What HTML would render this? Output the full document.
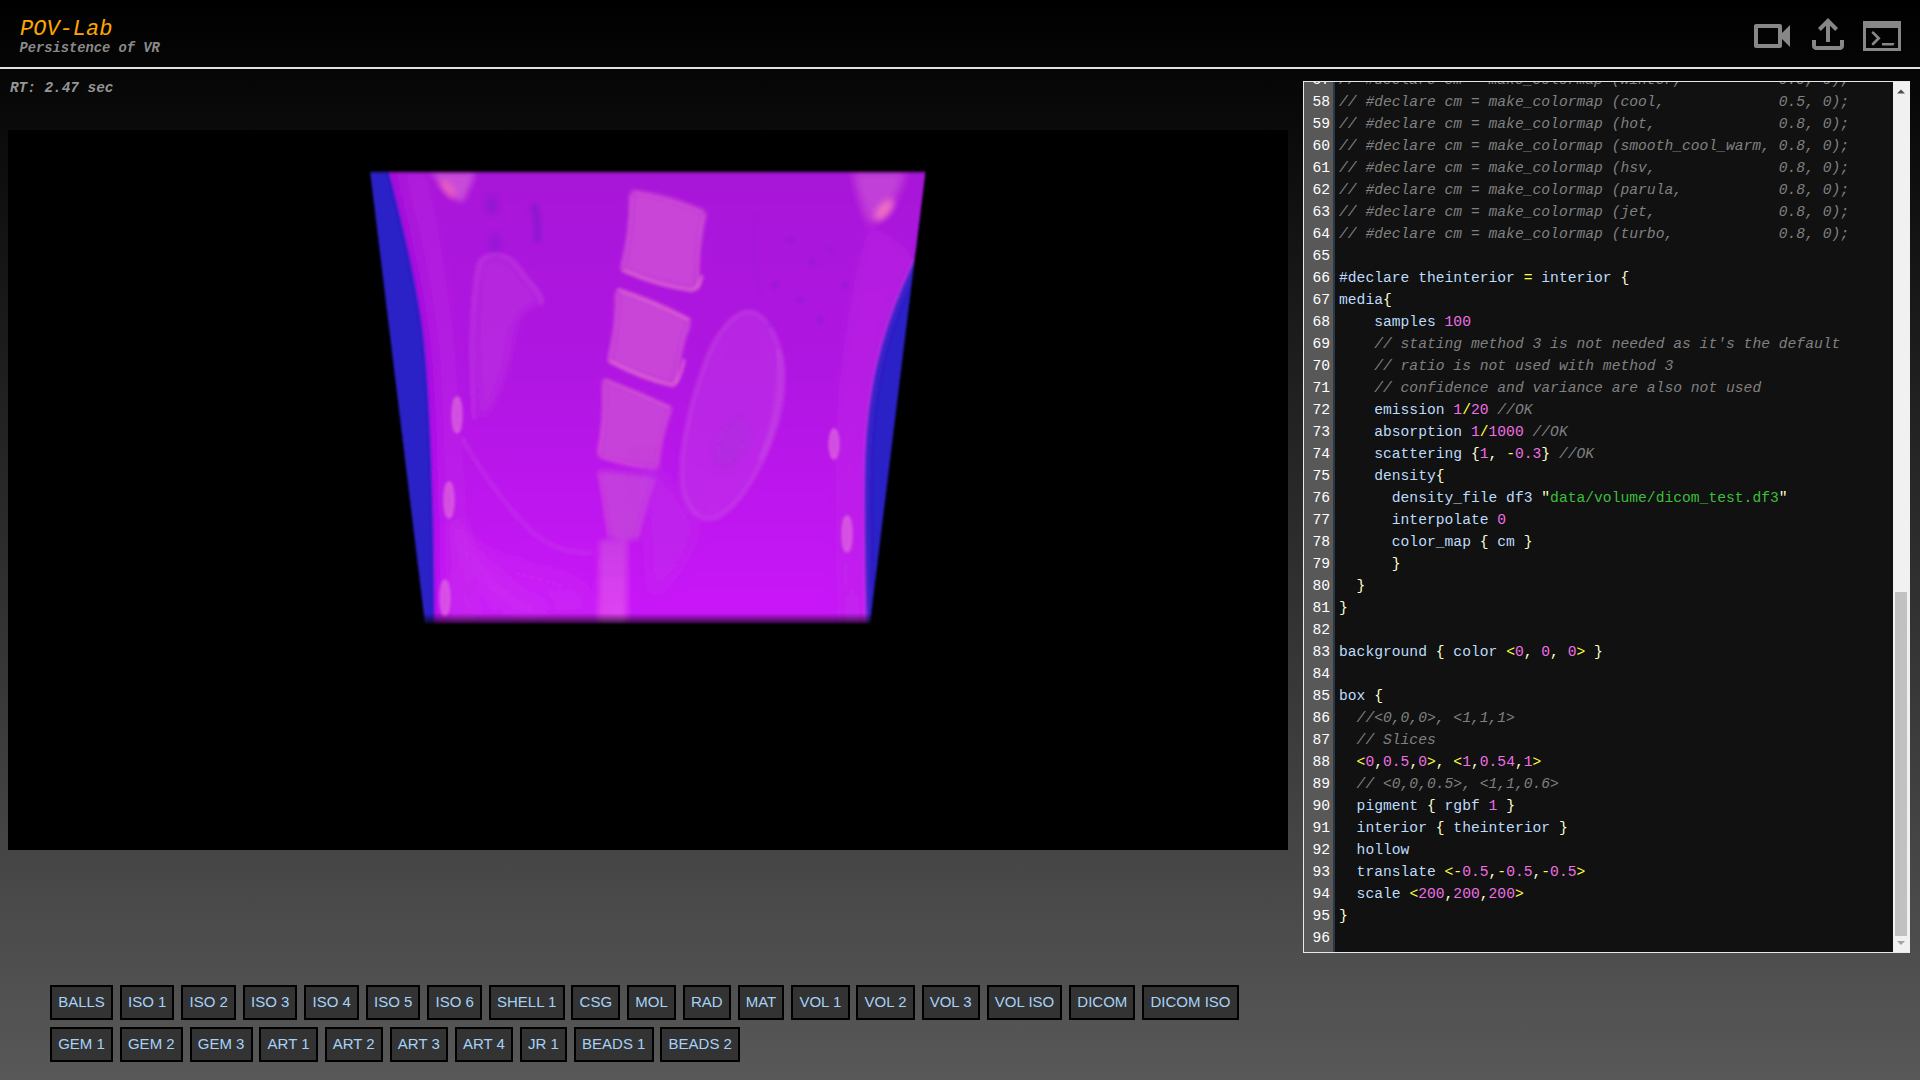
<!DOCTYPE html>
<html><head><meta charset="utf-8"><title>POV-Lab</title>
<style>
html,body{margin:0;padding:0;}
body{width:1920px;height:1080px;overflow:hidden;position:relative;background:linear-gradient(to bottom,#000 0px,#585858 1080px);font-family:"Liberation Sans",sans-serif;}
#hdr{position:absolute;left:0;top:0;width:1920px;height:67px;background:transparent;}
#hline{position:absolute;left:0;top:67px;width:1920px;height:2px;background:#e2e2e2;}
#title{position:absolute;left:20px;top:16px;font-family:"Liberation Mono",monospace;font-style:italic;font-size:22px;line-height:28px;color:#ffa500;white-space:pre;}
#sub{position:absolute;left:19.5px;top:40px;font-family:"Liberation Mono",monospace;font-style:italic;font-size:13.75px;line-height:18px;color:#8a8a8a;font-weight:bold;white-space:pre;}
#rt{position:absolute;left:10px;top:78px;font-family:"Liberation Mono",monospace;font-style:italic;font-size:14.37px;line-height:20px;color:#969696;font-weight:bold;white-space:pre;}
#icons{position:absolute;left:0;top:0;}
#vp{position:absolute;left:8px;top:130px;width:1280px;height:720px;background:#000;overflow:hidden;}
#panel{position:absolute;left:1303px;top:81px;width:605px;height:870px;border:1px solid #e8e8e8;border-right-color:#f1f1f1;background:#111;overflow:hidden;}
#gutter{position:absolute;left:0;top:0;width:29px;height:870px;background:#585858;}
#gstrip{position:absolute;left:29px;top:0;width:2px;height:870px;background:#2b3845;}
#code{position:absolute;left:0;top:-13px;font-family:"Liberation Mono",monospace;font-size:14.667px;line-height:22px;white-space:pre;color:#bddcfb;}
.ln{display:block;height:22px;position:relative;}
.n{position:absolute;left:0;width:26px;text-align:right;color:#fff;}
.t{position:absolute;left:35px;}
.c{color:#808080;font-style:italic;}
.y{color:#ffff40;}
.p{color:#f06ee6;}
.g{color:#3cbf3c;}
.w{color:#ffffd0;}
#sb{position:absolute;right:0;top:0;width:16px;height:870px;background:#f1f1f1;}
#thumb{position:absolute;left:2px;top:510px;width:12px;height:344px;background:#c1c1c1;}
#btns{position:absolute;left:50px;top:985px;}
.row{display:flex;gap:6.9px;margin-bottom:7px;}
.b{box-sizing:border-box;height:35px;border:2px solid #000;background:#333;color:#a6d2f8;font-family:"Liberation Sans",sans-serif;font-size:15px;line-height:29px;padding:0 6.13px 2px;white-space:pre;}
</style></head><body>
<div id="hdr"></div>
<div id="hline"></div>
<div id="title">POV-Lab</div>
<div id="sub">Persistence of VR</div>
<div id="rt">RT: 2.47 sec</div>
<svg id="icons" width="1920" height="67" viewBox="0 0 1920 67">
 <g fill="#878787">
  <g transform="translate(1748,12) scale(2)"><path d="M15 8v8H5V8h10m1-2H4c-.55 0-1 .45-1 1v10c0 .55.45 1 1 1h12c.55 0 1-.45 1-1v-3.5l4 4v-11l-4 4V7c0-.55-.45-1-1-1z"/></g>
  <g transform="translate(1804,58) scale(0.05)"><path d="M440-320v-326L336-542l-56-58 200-200 200 200-56 58-104-104v326h-80ZM240-160q-33 0-56.5-23.5T160-240v-120h80v120h480v-120h80v120q0 33-23.5 56.5T720-160H240Z"/></g>
  <path fill-rule="evenodd" d="M1863 21h38v30h-38zM1866 28h32v20h-32z"/>
  <path d="M1873 32.6L1878.7 38.3L1873 44" fill="none" stroke="#878787" stroke-width="2.7" stroke-linecap="round" stroke-linejoin="miter"/>
  <path d="M1882 43h12.5l-1 2.5h-11.5z"/>
 </g>
</svg>
<div id="vp"><svg width="1280" height="720" viewBox="8 130 1280 720" style="position:absolute;left:0;top:0">
 <defs>
  <linearGradient id="pg" x1="0" y1="171" x2="0" y2="622" gradientUnits="userSpaceOnUse">
   <stop offset="0" stop-color="#a814d8"/>
   <stop offset="0.45" stop-color="#b014e2"/>
   <stop offset="1" stop-color="#ca16fa"/>
  </linearGradient>
  <linearGradient id="sg" x1="0" y1="540" x2="0" y2="622" gradientUnits="userSpaceOnUse">
   <stop offset="0" stop-color="#c83ae4"/>
   <stop offset="1" stop-color="#e244f4"/>
  </linearGradient>
  <linearGradient id="fade" x1="0" y1="613" x2="0" y2="626" gradientUnits="userSpaceOnUse">
   <stop offset="0" stop-color="#000" stop-opacity="0"/>
   <stop offset="0.5" stop-color="#000" stop-opacity="0.45"/>
   <stop offset="1" stop-color="#000" stop-opacity="1"/>
  </linearGradient>
  <linearGradient id="tfade" x1="0" y1="168" x2="0" y2="175" gradientUnits="userSpaceOnUse"><stop offset="0" stop-color="#000" stop-opacity="1"/><stop offset="0.45" stop-color="#000" stop-opacity="0.5"/><stop offset="1" stop-color="#000" stop-opacity="0"/></linearGradient>
  <filter id="b1" filterUnits="userSpaceOnUse" x="300" y="140" width="700" height="520"><feGaussianBlur stdDeviation="1"/></filter>
  <filter id="b15" filterUnits="userSpaceOnUse" x="300" y="140" width="700" height="520"><feGaussianBlur stdDeviation="1.5"/></filter>
  <filter id="b2" filterUnits="userSpaceOnUse" x="300" y="140" width="700" height="520"><feGaussianBlur stdDeviation="2"/></filter>
  <filter id="b3" filterUnits="userSpaceOnUse" x="300" y="140" width="700" height="520"><feGaussianBlur stdDeviation="3"/></filter>
  <filter id="b5" filterUnits="userSpaceOnUse" x="300" y="140" width="700" height="520"><feGaussianBlur stdDeviation="5"/></filter>
  <filter id="b8" filterUnits="userSpaceOnUse" x="300" y="140" width="700" height="520"><feGaussianBlur stdDeviation="8"/></filter>
  <clipPath id="trap"><path d="M370 171H925.5L870 624H425Z"/></clipPath>
 </defs>
 <g filter="url(#b1)">
 <path d="M370 171H925.5L870 624H425Z" fill="#2c20c6"/>
 <g clip-path="url(#trap)">
  <path d="M389 171C398 205 413 262 422 322C428 362 434 460 435 630H866C864 560 862 470 866 430C871 370 885 320 914 259C920 240 925 200 926 171Z" fill="url(#pg)"/>
  <!-- subcutaneous lighter bands -->
  <path d="M402 171C414 215 430 280 437 350C442 420 446 520 448 630L478 630C470 540 463 440 458 360C452 290 440 220 428 171Z" fill="#c030e4" opacity="0.3" filter="url(#b5)"/>
  <path d="M392 171C400 205 415 262 424 322C430 362 436 460 437 630" fill="none" stroke="#a006e6" stroke-width="4" opacity="0.5" filter="url(#b2)"/>
  <path d="M869 225C855 270 845 330 838 400C834 470 836 560 840 630L866 630C864 560 862 470 866 430C871 370 885 320 914 259C900 240 880 230 869 225Z" fill="#c02ee6" opacity="0.45" filter="url(#b5)"/>
  <path d="M914 259C885 320 871 370 866 430C862 470 864 560 866 630" fill="none" stroke="#d040e8" stroke-width="2" opacity="0.7" filter="url(#b1)"/>
  <!-- corner blobs -->
  <path d="M431 172C440 185 452 198 462 203C468 192 473 182 475 172Z" fill="#c84cd8" filter="url(#b3)"/>
  <ellipse cx="448" cy="189" rx="4" ry="11" transform="rotate(-40 448 189)" fill="#f062bc" filter="url(#b3)"/>
  <path d="M852 171C856 190 862 210 868 225C884 218 900 200 906 171Z" fill="#c444d8" opacity="0.9" filter="url(#b5)"/>
  <ellipse cx="884" cy="210" rx="6" ry="13" transform="rotate(40 884 210)" fill="#f070c4" filter="url(#b3)"/>
  <!-- left kidney -->
  <path d="M477 265C485 250 505 250 520 270C530 285 545 295 541 305C532 305 520 310 515 330C510 370 500 400 482 420C474 400 470 330 477 265Z" fill="#c03ce0" opacity="0.45" filter="url(#b5)"/>
  <path d="M474 420C470 350 472 290 480 262C490 250 508 252 520 270C530 285 545 295 541 305" fill="none" stroke="#c850e0" stroke-width="3" opacity="0.6" filter="url(#b2)"/>
  <!-- lower left curves -->
  
  <path d="M455 520C470 570 500 600 540 615" fill="none" stroke="#cc44ea" stroke-width="10" opacity="0.45" filter="url(#b8)"/>
  <!-- right kidney -->
  <path d="M751 312C770 316 784 350 783 382C782 420 765 460 745 490C732 508 716 522 704 518C690 514 682 495 682 470C683 440 692 400 705 365C715 335 735 310 751 312Z" fill="#c23ce6" opacity="0.5" filter="url(#b5)"/>
  <path d="M751 312C770 316 784 350 783 382C782 420 765 460 745 490C732 508 716 522 704 518C690 514 682 495 682 470C683 440 692 400 705 365C715 335 735 310 751 312Z" fill="none" stroke="#cc56e4" stroke-width="3" opacity="0.65" filter="url(#b2)"/>
  <ellipse cx="732" cy="442" rx="16" ry="30" transform="rotate(25 732 442)" fill="#ac2ade" opacity="0.5" filter="url(#b5)"/><path d="M778 350C782 380 778 420 760 460" fill="none" stroke="#d462e2" stroke-width="3" opacity="0.5" filter="url(#b2)"/>
  <!-- spine vertebrae bodies -->
  <g filter="url(#b3)">
   <path d="M630.6 190.8Q668 195 705.8 211.7Q696 250 697.7 290.4Q660 286 621.3 269.5Q632 230 630.6 190.8Z" fill="#c944d8"/>
   <path d="M616.7 289.2Q654 300 690.8 320.5Q678 350 675.7 385.3Q640 378 608.6 361Q618 325 616.7 289.2Z" fill="#c944d8"/>
   <path d="M603 379Q638 392 672 408Q660 436 658 468Q628 466 598 456Q606 418 603 379Z" fill="#c742d8"/>
   <path d="M598 470Q627 472 655 477Q644 508 637 540Q622 540 609 537Q605 505 598 470Z" fill="#c43ede"/>
   <path d="M599 540H628C627 570 627 600 627 630H598C598 600 599 570 599 540Z" fill="url(#sg)"/>
  </g>
  <!-- endplates -->
  <g fill="none" stroke="#ec7ccc" filter="url(#b15)" stroke-linecap="round">
   <path d="M633 192Q668 197 703 212" stroke-width="1.5" opacity="0.6"/>
   <path d="M623 270Q660 286 692 290Q699 288 702 276" stroke-width="2.2"/>
   <path d="M618 290Q654 302 689 320" stroke-width="2"/>
   <path d="M610 361Q642 378 672 385Q679 383 684 360" stroke-width="2.2"/>
   <path d="M604 380Q638 393 670 408" stroke-width="1.8" opacity="0.8"/>
   <path d="M600 456Q628 466 656 468" stroke-width="1.6" opacity="0.6"/>
  </g>
  <g fill="none" stroke="#e272d0" filter="url(#b15)" opacity="0.75" stroke-width="1.8">
   <path d="M631 195Q632 230 622 268"/>
   <path d="M617 293Q618 325 609 360"/>
   <path d="M604 383Q606 418 599 454"/>
   <path d="M704 214Q696 250 698 288"/>
   <path d="M689 323Q678 350 676 383"/>
   <path d="M670 410Q660 436 657 466" opacity="0.7"/>
   <path d="M599 472Q605 505 609 536" opacity="0.5"/>
   <path d="M654 479Q644 508 637 538" opacity="0.5"/>
  </g>
  <!-- extra structures -->
  <path d="M462 438C480 470 500 500 530 530C550 548 570 553 592 553" fill="none" stroke="#c650e6" stroke-width="3" opacity="0.55" filter="url(#b2)"/>
  <path d="M452 520C470 540 500 556 540 565C570 572 590 580 596 600L596 622H452Z" fill="#d034f2" opacity="0.35" filter="url(#b8)"/>
  <path d="M640 455C665 470 690 500 700 525C690 560 670 585 650 600" fill="#c03ce6" opacity="0.35" filter="url(#b8)"/>
  <g fill="#8a20d4" opacity="0.45" filter="url(#b15)">
   <ellipse cx="790" cy="240" rx="5" ry="3"/><ellipse cx="812" cy="262" rx="4" ry="3"/><ellipse cx="775" cy="285" rx="4" ry="4"/>
   <ellipse cx="830" cy="250" rx="3" ry="3"/><ellipse cx="800" cy="300" rx="4" ry="3"/><ellipse cx="820" cy="320" rx="3" ry="4"/>
   <ellipse cx="770" cy="325" rx="3" ry="3"/><ellipse cx="845" cy="285" rx="3" ry="3"/>
  </g>
  <path d="M756 214C752 240 752 270 762 300" fill="none" stroke="#9a18d8" stroke-width="2" opacity="0.5" filter="url(#b15)"/>
  <!-- dark gas spots -->
  <ellipse cx="492" cy="205" rx="5" ry="10" fill="#7a1ccc" opacity="0.55" filter="url(#b3)"/><ellipse cx="495" cy="243" rx="6" ry="10" fill="#7a1ccc" opacity="0.4" filter="url(#b3)"/>
  <path d="M534 204C537 218 539 230 537 242" fill="none" stroke="#7a1ccc" stroke-width="7" opacity="0.6" filter="url(#b2)"/>
  <!-- bright ovals on edges -->
  <ellipse cx="457" cy="415" rx="4.5" ry="18" fill="#e06ae0" opacity="0.65" filter="url(#b15)"/><ellipse cx="457" cy="415" rx="4" ry="17" fill="none" stroke="#e878d8" stroke-width="1.8" opacity="0.7" filter="url(#b1)"/>
  <ellipse cx="449" cy="500" rx="4.5" ry="18" fill="#e06ae0" opacity="0.65" filter="url(#b15)"/><ellipse cx="449" cy="500" rx="4" ry="17" fill="none" stroke="#e878d8" stroke-width="1.8" opacity="0.7" filter="url(#b1)"/>
  <ellipse cx="445" cy="598" rx="4.5" ry="18" fill="#e06ae0" opacity="0.65" filter="url(#b15)"/><ellipse cx="445" cy="598" rx="4" ry="17" fill="none" stroke="#e878d8" stroke-width="1.8" opacity="0.7" filter="url(#b1)"/>
  <ellipse cx="834" cy="444" rx="4.5" ry="15" fill="#e06ae0" opacity="0.65" filter="url(#b15)"/><ellipse cx="834" cy="444" rx="4" ry="14" fill="none" stroke="#e878d8" stroke-width="1.8" opacity="0.7" filter="url(#b1)"/>
  <ellipse cx="847" cy="534" rx="4.5" ry="18" fill="#e06ae0" opacity="0.65" filter="url(#b15)"/><ellipse cx="847" cy="534" rx="4" ry="17" fill="none" stroke="#e878d8" stroke-width="1.8" opacity="0.7" filter="url(#b1)"/>
 </g>
 </g>
 <rect x="400" y="610" width="500" height="20" fill="url(#fade)"/>
 <rect x="360" y="168" width="580" height="7" fill="url(#tfade)"/>
</svg>
</div>
<div id="panel">
 <div id="gutter"></div><div id="gstrip"></div>
 <div id="code"><div class="ln"><span class="n">57</span><span class="t"><span class="c">// #declare cm = make_colormap (winter,           0.5, 0);</span></span></div><div class="ln"><span class="n">58</span><span class="t"><span class="c">// #declare cm = make_colormap (cool,             0.5, 0);</span></span></div><div class="ln"><span class="n">59</span><span class="t"><span class="c">// #declare cm = make_colormap (hot,              0.8, 0);</span></span></div><div class="ln"><span class="n">60</span><span class="t"><span class="c">// #declare cm = make_colormap (smooth_cool_warm, 0.8, 0);</span></span></div><div class="ln"><span class="n">61</span><span class="t"><span class="c">// #declare cm = make_colormap (hsv,              0.8, 0);</span></span></div><div class="ln"><span class="n">62</span><span class="t"><span class="c">// #declare cm = make_colormap (parula,           0.8, 0);</span></span></div><div class="ln"><span class="n">63</span><span class="t"><span class="c">// #declare cm = make_colormap (jet,              0.8, 0);</span></span></div><div class="ln"><span class="n">64</span><span class="t"><span class="c">// #declare cm = make_colormap (turbo,            0.8, 0);</span></span></div><div class="ln"><span class="n">65</span><span class="t"></span></div><div class="ln"><span class="n">66</span><span class="t">#declare theinterior <span class="y">=</span> interior <span class="w">{</span></span></div><div class="ln"><span class="n">67</span><span class="t">media<span class="w">{</span></span></div><div class="ln"><span class="n">68</span><span class="t">    samples <span class="p">100</span></span></div><div class="ln"><span class="n">69</span><span class="t">    <span class="c">// stating method 3 is not needed as it's the default</span></span></div><div class="ln"><span class="n">70</span><span class="t">    <span class="c">// ratio is not used with method 3</span></span></div><div class="ln"><span class="n">71</span><span class="t">    <span class="c">// confidence and variance are also not used</span></span></div><div class="ln"><span class="n">72</span><span class="t">    emission <span class="p">1</span><span class="y">/</span><span class="p">20</span> <span class="c">//OK</span></span></div><div class="ln"><span class="n">73</span><span class="t">    absorption <span class="p">1</span><span class="y">/</span><span class="p">1000</span> <span class="c">//OK</span></span></div><div class="ln"><span class="n">74</span><span class="t">    scattering <span class="w">{</span><span class="p">1</span><span class="w">, </span><span class="y">-</span><span class="p">0.3</span><span class="w">}</span> <span class="c">//OK</span></span></div><div class="ln"><span class="n">75</span><span class="t">    density<span class="w">{</span></span></div><div class="ln"><span class="n">76</span><span class="t">      density_file df3 <span class="w">"</span><span class="g">data/volume/dicom_test.df3</span><span class="w">"</span></span></div><div class="ln"><span class="n">77</span><span class="t">      interpolate <span class="p">0</span></span></div><div class="ln"><span class="n">78</span><span class="t">      color_map <span class="w">{</span> cm <span class="w">}</span></span></div><div class="ln"><span class="n">79</span><span class="t">      <span class="w">}</span></span></div><div class="ln"><span class="n">80</span><span class="t">  <span class="w">}</span></span></div><div class="ln"><span class="n">81</span><span class="t"><span class="w">}</span></span></div><div class="ln"><span class="n">82</span><span class="t"></span></div><div class="ln"><span class="n">83</span><span class="t">background <span class="w">{</span> color <span class="y">&lt;</span><span class="p">0</span><span class="w">, </span><span class="p">0</span><span class="w">, </span><span class="p">0</span><span class="y">&gt;</span> <span class="w">}</span></span></div><div class="ln"><span class="n">84</span><span class="t"></span></div><div class="ln"><span class="n">85</span><span class="t">box <span class="w">{</span></span></div><div class="ln"><span class="n">86</span><span class="t">  <span class="c">//&lt;0,0,0&gt;, &lt;1,1,1&gt;</span></span></div><div class="ln"><span class="n">87</span><span class="t">  <span class="c">// Slices</span></span></div><div class="ln"><span class="n">88</span><span class="t">  <span class="y">&lt;</span><span class="p">0</span><span class="w">,</span><span class="p">0.5</span><span class="w">,</span><span class="p">0</span><span class="y">&gt;</span><span class="w">, </span><span class="y">&lt;</span><span class="p">1</span><span class="w">,</span><span class="p">0.54</span><span class="w">,</span><span class="p">1</span><span class="y">&gt;</span></span></div><div class="ln"><span class="n">89</span><span class="t">  <span class="c">// &lt;0,0,0.5&gt;, &lt;1,1,0.6&gt;</span></span></div><div class="ln"><span class="n">90</span><span class="t">  pigment <span class="w">{</span> rgbf <span class="p">1</span> <span class="w">}</span></span></div><div class="ln"><span class="n">91</span><span class="t">  interior <span class="w">{</span> theinterior <span class="w">}</span></span></div><div class="ln"><span class="n">92</span><span class="t">  hollow</span></div><div class="ln"><span class="n">93</span><span class="t">  translate <span class="y">&lt;-</span><span class="p">0.5</span><span class="w">,</span><span class="y">-</span><span class="p">0.5</span><span class="w">,</span><span class="y">-</span><span class="p">0.5</span><span class="y">&gt;</span></span></div><div class="ln"><span class="n">94</span><span class="t">  scale <span class="y">&lt;</span><span class="p">200</span><span class="w">,</span><span class="p">200</span><span class="w">,</span><span class="p">200</span><span class="y">&gt;</span></span></div><div class="ln"><span class="n">95</span><span class="t"><span class="w">}</span></span></div><div class="ln"><span class="n">96</span><span class="t"></span></div></div>
 <div id="sb">
  <svg width="17" height="870" style="position:absolute;left:0;top:0">
   <path d="M4 11.5h8l-4-4z" fill="#505050"/>
   <rect x="2" y="510" width="12" height="344" fill="#c1c1c1"/>
   <path d="M4 859h8l-4 4z" fill="#a3a3a3"/>
  </svg>
 </div>
</div>
<div id="btns">
 <div class="row"><div class="b">BALLS</div><div class="b">ISO 1</div><div class="b">ISO 2</div><div class="b">ISO 3</div><div class="b">ISO 4</div><div class="b">ISO 5</div><div class="b">ISO 6</div><div class="b">SHELL 1</div><div class="b">CSG</div><div class="b">MOL</div><div class="b">RAD</div><div class="b">MAT</div><div class="b">VOL 1</div><div class="b">VOL 2</div><div class="b">VOL 3</div><div class="b">VOL ISO</div><div class="b">DICOM</div><div class="b">DICOM ISO</div></div>
 <div class="row"><div class="b">GEM 1</div><div class="b">GEM 2</div><div class="b">GEM 3</div><div class="b">ART 1</div><div class="b">ART 2</div><div class="b">ART 3</div><div class="b">ART 4</div><div class="b">JR 1</div><div class="b">BEADS 1</div><div class="b">BEADS 2</div></div>
</div>
</body></html>
